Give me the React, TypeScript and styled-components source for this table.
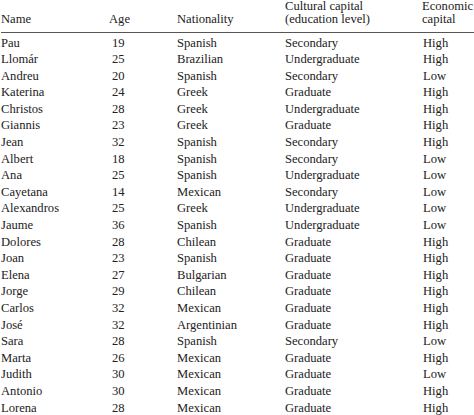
import React from 'react';
import styled, { createGlobalStyle } from 'styled-components';

interface Participant {
  name: string;
  age: number;
  nationality: string;
  education: string;
  economic: string;
}

const participants: Participant[] = [
  { name: 'Pau', age: 19, nationality: 'Spanish', education: 'Secondary', economic: 'High' },
  { name: 'Llomár', age: 25, nationality: 'Brazilian', education: 'Undergraduate', economic: 'High' },
  { name: 'Andreu', age: 20, nationality: 'Spanish', education: 'Secondary', economic: 'Low' },
  { name: 'Katerina', age: 24, nationality: 'Greek', education: 'Graduate', economic: 'High' },
  { name: 'Christos', age: 28, nationality: 'Greek', education: 'Undergraduate', economic: 'High' },
  { name: 'Giannis', age: 23, nationality: 'Greek', education: 'Graduate', economic: 'High' },
  { name: 'Jean', age: 32, nationality: 'Spanish', education: 'Secondary', economic: 'High' },
  { name: 'Albert', age: 18, nationality: 'Spanish', education: 'Secondary', economic: 'Low' },
  { name: 'Ana', age: 25, nationality: 'Spanish', education: 'Undergraduate', economic: 'Low' },
  { name: 'Cayetana', age: 14, nationality: 'Mexican', education: 'Secondary', economic: 'Low' },
  { name: 'Alexandros', age: 25, nationality: 'Greek', education: 'Undergraduate', economic: 'Low' },
  { name: 'Jaume', age: 36, nationality: 'Spanish', education: 'Undergraduate', economic: 'Low' },
  { name: 'Dolores', age: 28, nationality: 'Chilean', education: 'Graduate', economic: 'High' },
  { name: 'Joan', age: 23, nationality: 'Spanish', education: 'Graduate', economic: 'High' },
  { name: 'Elena', age: 27, nationality: 'Bulgarian', education: 'Graduate', economic: 'High' },
  { name: 'Jorge', age: 29, nationality: 'Chilean', education: 'Graduate', economic: 'High' },
  { name: 'Carlos', age: 32, nationality: 'Mexican', education: 'Graduate', economic: 'High' },
  { name: 'José', age: 32, nationality: 'Argentinian', education: 'Graduate', economic: 'High' },
  { name: 'Sara', age: 28, nationality: 'Spanish', education: 'Secondary', economic: 'Low' },
  { name: 'Marta', age: 26, nationality: 'Mexican', education: 'Graduate', economic: 'High' },
  { name: 'Judith', age: 30, nationality: 'Mexican', education: 'Graduate', economic: 'Low' },
  { name: 'Antonio', age: 30, nationality: 'Mexican', education: 'Graduate', economic: 'High' },
  { name: 'Lorena', age: 28, nationality: 'Mexican', education: 'Graduate', economic: 'High' },
];

const GlobalStyle = createGlobalStyle`
  html, body {
    margin: 0;
    padding: 0;
    background: #ffffff;
    overflow: hidden;
  }
`;

const Table = styled.div`
  width: 540px;
  padding-left: 1px;
  font-family: "Liberation Serif", "Times New Roman", serif;
  font-size: 12.6px;
  color: #222222;
`;

const columns = '107px 69px 108px 137px 1fr';

const HeaderRow = styled.div`
  display: grid;
  grid-template-columns: ${columns};
  align-items: end;
  padding-bottom: 6px;
  border-bottom: 1.5px solid #555555;
  line-height: 13px;
`;

const BodyRow = styled.div`
  display: grid;
  grid-template-columns: ${columns};
  height: 16.6px;
  line-height: 16.6px;
  white-space: nowrap;
`;

const Body = styled.div`
  padding-top: 1.5px;
`;

const Cell = styled.div<{ $indent?: number }>`
  padding-left: ${p => p.$indent ?? 0}px;
  white-space: nowrap;
`;

export default function App() {
  return (
    <>
      <GlobalStyle />
      <Table>
        <HeaderRow>
          <Cell>Name</Cell>
          <Cell $indent={1}>Age</Cell>
          <Cell>Nationality</Cell>
          <Cell>
            Cultural capital
            <br />
            (education level)
          </Cell>
          <Cell>
            Economic
            <br />
            capital
          </Cell>
        </HeaderRow>
        <Body>
          {participants.map(p => (
            <BodyRow key={p.name}>
              <Cell>{p.name}</Cell>
              <Cell $indent={4}>{p.age}</Cell>
              <Cell>{p.nationality}</Cell>
              <Cell>{p.education}</Cell>
              <Cell $indent={1}>{p.economic}</Cell>
            </BodyRow>
          ))}
        </Body>
      </Table>
    </>
  );
}
